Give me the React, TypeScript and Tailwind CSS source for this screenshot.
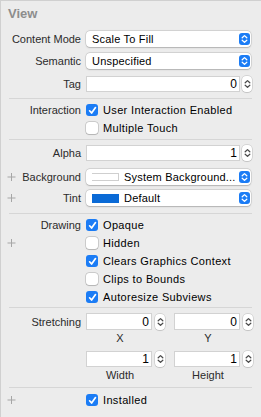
import React from "react";

const FONT = { fontFamily: "'Liberation Sans', Arial, sans-serif" };

function Plus() {
  return (
    <svg className="absolute left-[6px] top-1/2 -translate-y-1/2" width="9" height="9" viewBox="0 0 9 9">
      <path d="M4.5 0.5v8M0.5 4.5h8" stroke="#a6a6a6" strokeWidth="1" />
    </svg>
  );
}

function Chevrons({ color }: { color: string }) {
  return (
    <svg width="7" height="10" viewBox="0 0 7 10" fill="none">
      <path d="M1.2 3.8L3.5 1.6L5.8 3.8M1.2 6.2L3.5 8.4L5.8 6.2" stroke={color} strokeWidth="1.3" strokeLinecap="round" strokeLinejoin="round" />
    </svg>
  );
}

function Stepper() {
  return (
    <div className="w-[10px] h-[16px] shrink-0 rounded-[4px] bg-white shadow-[0_0_0_0.5px_rgba(0,0,0,0.18),0_0.5px_1px_rgba(0,0,0,0.15)] flex items-center justify-center">
      <Chevrons color="#4a4a4a" />
    </div>
  );
}

function Field({ value, className = "" }: { value: string; className?: string }) {
  return (
    <div className={`h-[16px] bg-white shadow-[inset_0_0_0_1px_#d2d2d2] flex items-center justify-end pr-[3px] text-black text-[12px] ${className}`}>
      {value}
    </div>
  );
}

function Popup({ children }: { children: React.ReactNode }) {
  return (
    <div className="h-[16px] mr-[1px] rounded-[4px] bg-white shadow-[0_0_0_0.5px_rgba(0,0,0,0.16),0_0.5px_1.5px_rgba(0,0,0,0.18)] flex items-center pl-[6px] pr-[1px] text-black tracking-[0.2px]">
      <div className="flex-1 flex items-center min-w-0 whitespace-nowrap overflow-hidden">{children}</div>
      <div className="w-[11px] h-[12px] shrink-0 rounded-[3px] bg-[#1b7cf5] flex items-center justify-center">
        <Chevrons color="#ffffff" />
      </div>
    </div>
  );
}

function Check({ on }: { on?: boolean }) {
  return on ? (
    <div className="w-[12px] h-[12px] shrink-0 rounded-[3px] bg-[#1b7cf5] flex items-center justify-center">
      <svg width="9" height="9" viewBox="0 0 9 9" fill="none">
        <path d="M1.6 4.8L3.6 7L7.5 1.6" stroke="white" strokeWidth="1.7" strokeLinecap="round" strokeLinejoin="round" />
      </svg>
    </div>
  ) : (
    <div className="w-[12px] h-[12px] shrink-0 rounded-[3px] bg-white shadow-[0_0_0_0.5px_rgba(0,0,0,0.25),0_0.5px_1px_rgba(0,0,0,0.12)]" />
  );
}

function Row({ label, plus, className = "", children }: { label?: string; plus?: boolean; className?: string; children: React.ReactNode }) {
  return (
    <div className={`flex items-center ${className}`}>
      <div className="relative w-[80px] shrink-0 text-right text-[#2b2b2b] whitespace-nowrap">
        {plus && <Plus />}
        {label}
      </div>
      <div className="ml-[5px] flex-1 min-w-0">{children}</div>
    </div>
  );
}

function CheckRow({ label, text, on, plus }: { label?: string; text: string; on?: boolean; plus?: boolean }) {
  return (
    <Row label={label} plus={plus} className="h-[18px]">
      <div className="flex items-center gap-[5px] text-black whitespace-nowrap tracking-[0.35px]">
        <Check on={on} />
        {text}
      </div>
    </Row>
  );
}

function Divider() {
  return <div className="ml-[8px] h-px bg-[#d6d6d6]" />;
}

export default function App() {
  return (
    <div className="w-[261px] h-[417px] overflow-hidden bg-[#ececec] border-l border-t border-[#d0d0d0] text-[11px] leading-[14px] pr-[9px]" style={FONT}>
      <div className="h-[30px] pl-[7px] pt-[5px] text-[13px] leading-[16px] font-bold text-[#8d8d8d]">View</div>

      <Row label="Content Mode" className="h-[16px]">
        <Popup>Scale To Fill</Popup>
      </Row>
      <Row label="Semantic" className="h-[16px] mt-[6px]">
        <Popup>Unspecified</Popup>
      </Row>
      <Row label="Tag" className="h-[16px] mt-[7px] mb-[6px]">
        <div className="flex items-center gap-[2px]">
          <Field value="0" className="flex-1" />
          <Stepper />
        </div>
      </Row>
      <Divider />

      <div className="py-[2px]">
        <CheckRow label="Interaction" text="User Interaction Enabled" on />
        <CheckRow text="Multiple Touch" />
      </div>
      <Divider />

      <div className="pt-[5px] pb-[7px]">
        <Row label="Alpha" className="h-[16px]">
          <div className="flex items-center gap-[2px]">
            <Field value="1" className="flex-1" />
            <Stepper />
          </div>
        </Row>
        <Row label="Background" plus className="h-[16px] mt-[8px]">
          <Popup>
            <span className="w-[28px] h-[8px] shrink-0 bg-white shadow-[inset_0_0_0_1px_#cfcfcf] mr-[5px] -ml-[1px]" />
            <span>System Background...</span>
          </Popup>
        </Row>
        <Row label="Tint" plus className="h-[16px] mt-[5px]">
          <Popup>
            <span className="w-[28px] h-[9px] shrink-0 bg-[#0a6ad6] mr-[5px] -ml-[1px]" />
            <span>Default</span>
          </Popup>
        </Row>
      </div>
      <Divider />

      <div className="pt-[2px] pb-[1px]">
        <CheckRow label="Drawing" text="Opaque" on />
        <CheckRow plus text="Hidden" />
        <CheckRow text="Clears Graphics Context" on />
        <CheckRow text="Clips to Bounds" />
        <CheckRow text="Autoresize Subviews" on />
      </div>
      <Divider />

      <div className="pt-[5px] pb-[5px]">
        <Row label="Stretching" className="h-[17px]">
          <div className="flex gap-[9px]">
            <div className="flex items-center gap-[3px]">
              <Field value="0" className="w-[66px] h-[17px]" />
              <Stepper />
            </div>
            <div className="flex items-center gap-[3px]">
              <Field value="0" className="w-[66px] h-[17px]" />
              <Stepper />
            </div>
          </div>
        </Row>
        <div className="flex ml-[86px] gap-[22px] h-[14px] mt-[1px] text-[11px] text-[#2b2b2b]">
          <div className="w-[66px] text-center">X</div>
          <div className="w-[66px] text-center">Y</div>
        </div>
        <Row className="h-[16px] mt-[6px]">
          <div className="flex gap-[9px]">
            <div className="flex items-center gap-[3px]">
              <Field value="1" className="w-[66px]" />
              <Stepper />
            </div>
            <div className="flex items-center gap-[3px]">
              <Field value="1" className="w-[66px]" />
              <Stepper />
            </div>
          </div>
        </Row>
        <div className="flex ml-[86px] gap-[22px] h-[14px] mt-[1px] text-[11px] text-[#2b2b2b]">
          <div className="w-[66px] text-center">Width</div>
          <div className="w-[66px] text-center">Height</div>
        </div>
      </div>
      <Divider />

      <div className="pt-[3px] pb-[8px]">
        <CheckRow plus text="Installed" on />
      </div>
      <Divider />
    </div>
  );
}
